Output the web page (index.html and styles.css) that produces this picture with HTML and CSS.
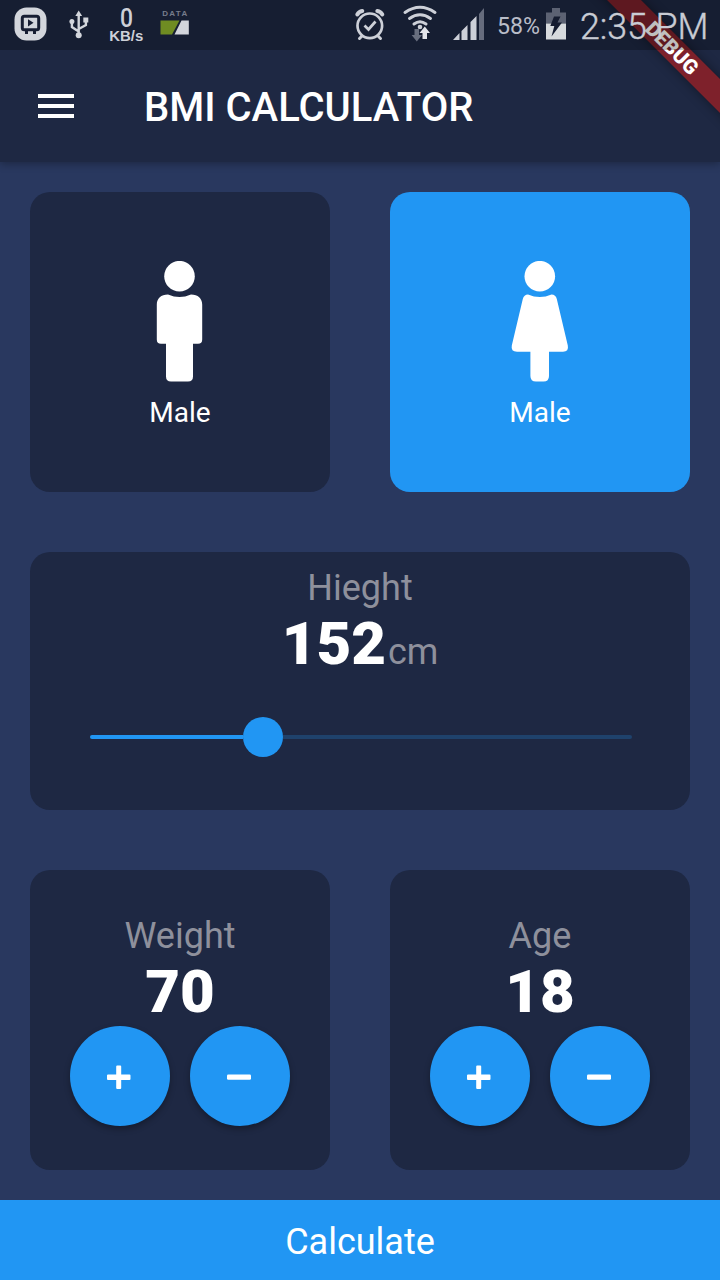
FILE: index.html
```
<!DOCTYPE html>
<html lang="en">
<head>
<meta charset="utf-8">
<title>BMI Calculator</title>
<link rel="stylesheet" href="styles.css">
</head>
<body>
<div class="screen">
  <header class="top">
    <div class="status">
      <svg class="status-left" width="200" height="50" viewBox="0 0 200 50">
        <rect x="14.5" y="7.5" width="32" height="33" rx="12" fill="#d3d6dc"/>
        <rect x="22.3" y="16.300" width="16.400" height="13.500" rx="2" fill="none" stroke="#171e33" stroke-width="3"/>
        <path d="M28 19.200v7.200l5.500-3.600z" fill="#171e33"/>
        <path d="M26.500 30v4M34.500 30v4" stroke="#171e33" stroke-width="3"/>
        <path d="M78.700 14v20M78.700 31.500l-6.800-4.500v-5M78.700 29l7.200-4v-4" fill="none" stroke="#d3d6dc" stroke-width="2.400"/>
        <path d="M78.700 10.500l3.400 5.500h-6.800z" fill="#d3d6dc"/>
        <circle cx="78.700" cy="35.300" r="3" fill="#d3d6dc"/>
        <circle cx="71.900" cy="21.500" r="2.500" fill="#d3d6dc"/>
        <path d="M83.300 17.500h5v5h-5z" fill="#d3d6dc"/>
        <text class="net-value" x="126.500" y="27" textLength="13" lengthAdjust="spacingAndGlyphs">0</text>
        <text class="net-unit" x="126.300" y="41" textLength="34" lengthAdjust="spacingAndGlyphs">KB/s</text>
        <text class="net-data" x="174.700" y="16" textLength="25">DATA</text>
        <path d="M160.500 20.500h19l-7.500 14h-11.500z" fill="#6f8c22"/>
        <path d="M181.500 20.500h7.300v14h-14.300z" fill="#d3d6dc"/>
      </svg>
      <svg class="status-right" width="380" height="50" viewBox="340 0 380 50">
        <g fill="none" stroke="#cdd0d8" stroke-linecap="round">
          <circle cx="369.800" cy="25.800" r="12.300" stroke-width="2.700"/>
          <path d="M364.500 25.500l4 4 7-8" stroke-width="2.700" stroke-linecap="butt"/>
          <path d="M357.300 14.500a7 7 0 0 1 5-3.500M382.300 14.500a7 7 0 0 0-5-3.500" stroke-width="4"/>
          <path d="M361.500 36.500l-2 2M378.500 36.500l2 2" stroke-width="3"/>
          <path d="M405 12.500q15-10.500 30 0M409.500 18.500q10.500-7.500 21 0M414 24q6-4.500 12 0" stroke-width="3"/>
        </g>
        <circle cx="420" cy="27" r="2.300" fill="#cdd0d8"/>
        <path d="M414.500 29h4.500v6h3l-5.200 6.500-5.200-6.500h2.900z" fill="#686e7e"/>
        <path d="M422.500 39v-6h-3l5.300-6.500 5.200 6.500h-3v6z" fill="#e3e5ea"/>
        <path d="M453 40l6.500-7v7zM461.500 40v-9l6-6v15zM470.500 40v-18l6-6v24z" fill="#cdd0d8"/>
        <path d="M479 40v-26l5-6v32z" fill="#666c7d"/>
        <text class="battery" x="497" y="34.300" textLength="43" lengthAdjust="spacingAndGlyphs">58%</text>
        <path d="M546 12.500h6v-4.500h8v4.500h6v11h-20z" fill="#5c6273"/>
        <path d="M546 23.500h20v16h-20z" fill="#d7dadd"/>
        <path d="M554 16.500h6.500l-3 6h4.500l-10.500 14 2.800-10.500h-4z" fill="#151c30"/>
        <text class="clock" x="580" y="39" textLength="128.500" lengthAdjust="spacingAndGlyphs">2:35 PM</text>
      </svg>
    </div>
    <div class="appbar">
      <svg class="menu" width="36" height="24" viewBox="0 0 36 24"><path d="M0 2h36M0 12h36M0 22h36" stroke="#fff" stroke-width="4"/></svg>
      <h1 class="title">BMI CALCULATOR</h1>
    </div>
    <div class="ribbon-clip"><div class="ribbon">DEBUG</div></div>
  </header>

  <main class="body">
    <div class="row">
      <div class="card person">
        <svg width="60" height="122" viewBox="0 0 60 122" fill="#fff">
          <circle cx="29.500" cy="15.200" r="15.300"/>
          <path d="M18 33.500Q24 36 29.500 36T41 33.500C48 33.500 52.200 37.500 52.200 43.500V78.500Q52.200 82.800 48 82.800H43V115.500Q43 120.500 38 120.500H21Q16 120.500 16 115.500V82.800H11Q6.800 82.800 6.800 78.500V43.500C6.800 37.500 11 33.500 18 33.500Z"/>
        </svg>
        <span class="person-label">Male</span>
      </div>
      <div class="card person selected">
        <svg width="60" height="122" viewBox="0 0 60 122" fill="#fff">
          <circle cx="29.800" cy="15.200" r="15.300"/>
          <path d="M18 33.500Q24 36 29.800 36T41.500 33.500Q45.700 33.500 46.800 38L57.800 84.500Q59 90.700 53 90.700H39V115Q39 120.500 33.500 120.500H26Q20.400 120.500 20.400 115V90.700H7Q.6 90.700 1.800 84.500L12.800 38Q14 33.500 18 33.500Z"/>
        </svg>
        <span class="person-label">Male</span>
      </div>
    </div>

    <div class="card height">
      <span class="label">Hieght</span>
      <div class="height-value"><span class="number">152</span><span class="label">cm</span></div>
      <div class="slider"><div class="slider-active"></div><div class="thumb"></div><div class="slider-rest"></div></div>
    </div>

    <div class="row">
      <div class="card counter">
        <span class="label">Weight</span>
        <span class="number">70</span>
        <div class="buttons">
          <button class="round" aria-label="Increase weight"><svg width="26" height="26" viewBox="0 0 26 26"><path d="M1 11.500q0-1 1-1h8.200v-8q0-1 1-1h3q1 0 1 1v8h8.300q1 0 1 1v3.500q0 1-1 1h-8.300v8q0 1-1 1h-3q-1 0-1-1v-8H2q-1 0-1-1z" fill="#fff"/></svg></button>
          <button class="round" aria-label="Decrease weight"><svg width="26" height="26" viewBox="0 0 26 26"><rect x="1" y="10.500" width="24" height="5.300" rx="1.300" fill="#fff"/></svg></button>
        </div>
      </div>
      <div class="card counter">
        <span class="label">Age</span>
        <span class="number">18</span>
        <div class="buttons">
          <button class="round" aria-label="Increase age"><svg width="26" height="26" viewBox="0 0 26 26"><path d="M1 11.500q0-1 1-1h8.200v-8q0-1 1-1h3q1 0 1 1v8h8.300q1 0 1 1v3.500q0 1-1 1h-8.300v8q0 1-1 1h-3q-1 0-1-1v-8H2q-1 0-1-1z" fill="#fff"/></svg></button>
          <button class="round" aria-label="Decrease age"><svg width="26" height="26" viewBox="0 0 26 26"><rect x="1" y="10.500" width="24" height="5.300" rx="1.300" fill="#fff"/></svg></button>
        </div>
      </div>
    </div>
  </main>

  <button class="calculate">Calculate</button>
</div>
</body>
</html>
```
FILE: styles.css
```
* { box-sizing: border-box; }
body { margin: 0; font-family: Roboto, sans-serif; color: #fff; }
.screen {
  width: 720px;
  height: 1280px;
  display: flex;
  flex-direction: column;
  background: #29385f;
  overflow: hidden;
}
.top {
  position: relative;
  height: 162px;
  background: #1e2843;
  box-shadow: 0 2px 8px rgba(0, 0, 0, .3);
}
.status {
  position: relative;
  z-index: 2;
  height: 50px;
  display: flex;
  justify-content: space-between;
  background: rgba(0, 0, 0, .25);
}
.status-left, .status-right { display: block; }
.net-value { font: 500 26px Roboto, sans-serif; fill: #cdd0d8; text-anchor: middle; }
.net-unit { font: 700 14px "Liberation Sans", sans-serif; fill: #cdd0d8; text-anchor: middle; }
.net-data { font: 700 8px "Liberation Sans", sans-serif; fill: #767c8b; text-anchor: middle; }
.battery { font: 400 24px Roboto, sans-serif; fill: #b9bdc8; }
.clock { font: 300 36px Roboto, sans-serif; fill: #c9ccd4; stroke: #c9ccd4; stroke-width: .4px; }
.appbar {
  height: 112px;
  padding: 0 38px;
  display: flex;
  align-items: center;
  gap: 70px;
}
.menu { display: block; }
.title { margin: 4px 0 0; font-size: 40px; font-weight: 500; line-height: 48px; white-space: nowrap; }
.ribbon-clip {
  position: absolute;
  top: 0;
  right: 0;
  width: 160px;
  height: 160px;
  overflow: hidden;
}
.ribbon {
  position: absolute;
  left: 12px;
  top: 36px;
  width: 200px;
  height: 24px;
  transform: rotate(45deg);
  background: rgba(183, 28, 28, .627);
  box-shadow: 0 0 12px rgba(0, 0, 0, .4);
  font-size: 20.4px;
  font-weight: 900;
  line-height: 24px;
  text-align: center;
}
.body {
  flex: 1;
  padding: 30px;
  display: flex;
  flex-direction: column;
  gap: 60px;
}
.row { display: grid; grid-template-columns: 1fr 1fr; gap: 60px; }
.card {
  display: flex;
  flex-direction: column;
  align-items: center;
  background: #1e2843;
  border-radius: 20px;
}
.person { height: 300px; padding-top: 69px; }
.selected { background: #2196f3; }
.person-label { margin-top: 13px; font-size: 28px; line-height: 33px; }
.height { height: 258px; padding-top: 15px; }
.label { font-size: 36px; line-height: 42px; color: #8e909c; }
.number { font-size: 60px; font-weight: 900; line-height: 70px; }
.height-value { display: flex; align-items: baseline; gap: 2px; }
.slider {
  width: 542px;
  height: 40px;
  margin-top: 38px;
  margin-left: 2px;
  display: flex;
  align-items: center;
}
.slider-active { width: 153px; height: 4px; border-radius: 2px 0 0 2px; background: #2196f3; }
.thumb { width: 40px; height: 40px; border-radius: 50%; background: #2196f3; }
.slider-rest { flex: 1; height: 4px; border-radius: 0 2px 2px 0; background: #1f426c; }
.counter { height: 300px; padding-top: 45px; }
.buttons { display: flex; gap: 20px; margin-top: -1px; }
.round {
  width: 100px;
  height: 100px;
  padding: 2px 2px 0 0;
  display: flex;
  align-items: center;
  justify-content: center;
  border: 0;
  border-radius: 50%;
  background: #2196f3;
  box-shadow: 0 3px 6px rgba(0, 0, 0, .3);
}
.calculate {
  height: 80px;
  padding: 4px 0 0;
  border: 0;
  background: #2196f3;
  color: #fff;
  font: 400 36px Roboto, sans-serif;
}
```
